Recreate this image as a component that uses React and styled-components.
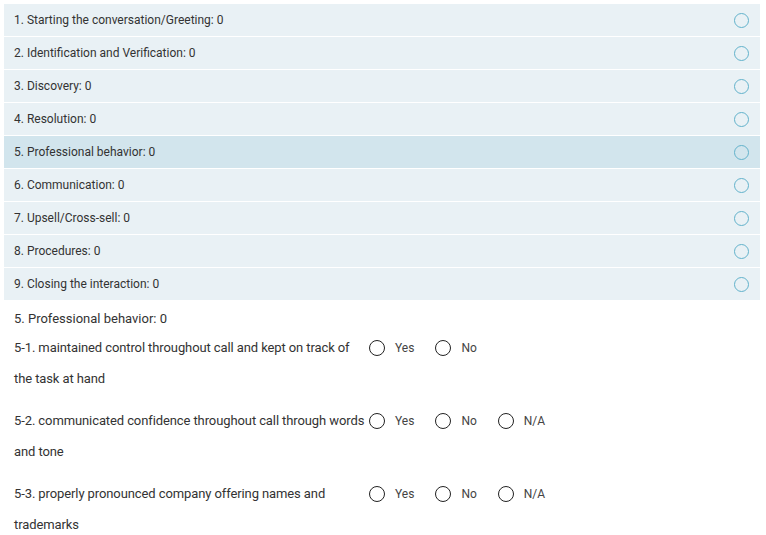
import styled, { createGlobalStyle } from 'styled-components';

const GlobalStyle = createGlobalStyle`
  body {
    margin: 0;
    background: #fff;
    font-family: Roboto, "Liberation Sans", Arial, sans-serif;
    color: #333;
  }
`;

const Page = styled.div`
  padding: 4px 6px 0 4px;
`;

const CategoryList = styled.div`
  display: flex;
  flex-direction: column;
`;

const CategoryRow = styled.div`
  height: 32px;
  display: flex;
  align-items: center;
  justify-content: space-between;
  padding: 0 10px;
  border-bottom: 1px solid #fff;
  background: ${(p) => (p.$active ? '#d2e5ed' : '#e9f1f5')};
  font-size: 12px;
  color: #333;
`;

const RowRadio = styled.span`
  width: 13px;
  height: 13px;
  border: 1.5px solid #62b2cb;
  border-radius: 50%;
  margin-right: 1px;
`;

const Detail = styled.div`
  padding: 8px 10px 0 10px;
  font-size: 13px;
  color: #333;
`;

const Heading = styled.div`
  height: 23px;
  line-height: 20px;
`;

const Question = styled.div`
  display: flex;
  align-items: flex-start;
  margin-bottom: 11px;
`;

const QuestionText = styled.div`
  width: 355px;
  line-height: 31px;
  letter-spacing: -0.1px;
`;

const Options = styled.div`
  display: flex;
  height: 31px;
  align-items: center;
`;

const Option = styled.label`
  display: flex;
  align-items: center;
  margin-right: 21px;
  font-size: 12px;
  color: #444;
`;

const Circle = styled.span`
  width: 14px;
  height: 14px;
  border: 1.5px solid #222;
  border-radius: 50%;
  margin-right: 10px;
`;

const categories = [
  '1. Starting the conversation/Greeting: 0',
  '2. Identification and Verification: 0',
  '3. Discovery: 0',
  '4. Resolution: 0',
  '5. Professional behavior: 0',
  '6. Communication: 0',
  '7. Upsell/Cross-sell: 0',
  '8. Procedures: 0',
  '9. Closing the interaction: 0',
];

const questions = [
  { text: '5-1. maintained control throughout call and kept on track of the task at hand', options: ['Yes', 'No'] },
  { text: '5-2. communicated confidence throughout call through words and tone', options: ['Yes', 'No', 'N/A'] },
  { text: '5-3. properly pronounced company offering names and trademarks', options: ['Yes', 'No', 'N/A'] },
];

export default function App() {
  return (
    <Page>
      <GlobalStyle />
      <CategoryList>
        {categories.map((c, i) => (
          <CategoryRow key={c} $active={i === 4}>
            {c}
            <RowRadio />
          </CategoryRow>
        ))}
      </CategoryList>
      <Detail>
        <Heading>5. Professional behavior: 0</Heading>
        {questions.map((q) => (
          <Question key={q.text}>
            <QuestionText>{q.text}</QuestionText>
            <Options>
              {q.options.map((o) => (
                <Option key={o}>
                  <Circle />
                  {o}
                </Option>
              ))}
            </Options>
          </Question>
        ))}
      </Detail>
    </Page>
  );
}
